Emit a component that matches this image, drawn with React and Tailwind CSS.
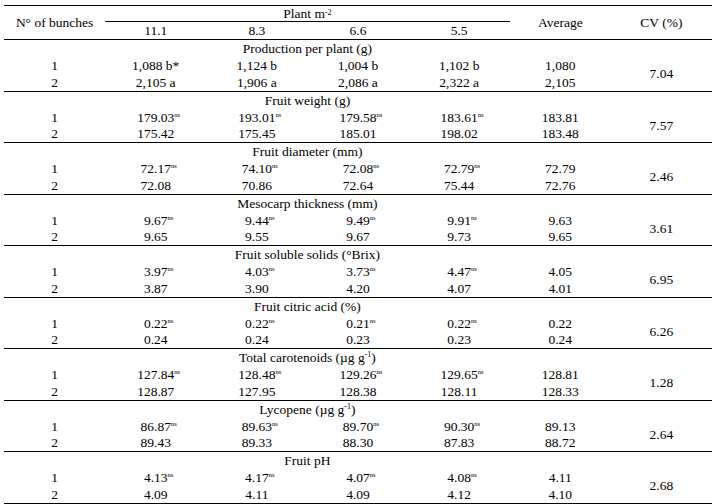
import React from 'react';

// Données du tableau : titre, deux lignes (4 densités + moyenne), CV
const sections = [
  {
    title: <>Production per plant (g)</>,
    rows: [
      ['1,088 b*', '1,124 b', '1,004 b', '1,102 b', '1,080'],
      ['2,105 a', '1,906 a', '2,086 a', '2,322 a', '2,105'],
    ],
    cv: '7.04',
    ns: false,
  },
  {
    title: <>Fruit weight (g)</>,
    rows: [
      ['179.03', '193.01', '179.58', '183.61', '183.81'],
      ['175.42', '175.45', '185.01', '198.02', '183.48'],
    ],
    cv: '7.57',
    ns: true,
  },
  {
    title: <>Fruit diameter (mm)</>,
    rows: [
      ['72.17', '74.10', '72.08', '72.79', '72.79'],
      ['72.08', '70.86', '72.64', '75.44', '72.76'],
    ],
    cv: '2.46',
    ns: true,
  },
  {
    title: <>Mesocarp thickness (mm)</>,
    rows: [
      ['9.67', '9.44', '9.49', '9.91', '9.63'],
      ['9.65', '9.55', '9.67', '9.73', '9.65'],
    ],
    cv: '3.61',
    ns: true,
  },
  {
    title: <>Fruit soluble solids (°Brix)</>,
    rows: [
      ['3.97', '4.03', '3.73', '4.47', '4.05'],
      ['3.87', '3.90', '4.20', '4.07', '4.01'],
    ],
    cv: '6.95',
    ns: true,
  },
  {
    title: <>Fruit citric acid (%)</>,
    rows: [
      ['0.22', '0.22', '0.21', '0.22', '0.22'],
      ['0.24', '0.24', '0.23', '0.23', '0.24'],
    ],
    cv: '6.26',
    ns: true,
  },
  {
    title: <>Total carotenoids (µg g<Sup>-1</Sup>)</>,
    rows: [
      ['127.84', '128.48', '129.26', '129.65', '128.81'],
      ['128.87', '127.95', '128.38', '128.11', '128.33'],
    ],
    cv: '1.28',
    ns: true,
  },
  {
    title: <>Lycopene (µg g<Sup>-1</Sup>)</>,
    rows: [
      ['86.87', '89.63', '89.70', '90.30', '89.13'],
      ['89.43', '89.33', '88.30', '87.83', '88.72'],
    ],
    cv: '2.64',
    ns: true,
  },
  {
    title: <>Fruit pH</>,
    rows: [
      ['4.13', '4.17', '4.07', '4.08', '4.11'],
      ['4.09', '4.11', '4.09', '4.12', '4.10'],
    ],
    cv: '2.68',
    ns: true,
  },
];

function Sup({ children }) {
  return <sup className="text-[8px] top-[-3px]">{children}</sup>;
}

// marque "ns" : déborde à droite sans décaler le nombre
function Ns() {
  return <sup className="inline-block w-0 text-left text-[6.5px] top-[-5px]">ns</sup>;
}

const Section = ({ section, tall }) => (
  <div className={`grid grid-cols-7 border-t border-black ${tall ? 'grid-rows-[17px_17px_17px]' : 'grid-rows-[17px_17px_16px]'}`}>
    <div className="col-start-2 col-span-4 flex items-center justify-center">
      {section.title}
    </div>
    {section.rows.map((row, r) => (
      <React.Fragment key={r}>
        <div className="col-start-1 flex items-center justify-center">{r + 1}</div>
        {row.map((v, i) => (
          <div key={i} className="flex items-center justify-center">
            <span>
              {v}
              {section.ns && r === 0 && i < 4 && <Ns />}
            </span>
          </div>
        ))}
        {r === 0 && (
          <div className="col-start-7 row-start-2 row-span-2 flex items-center justify-center">
            {section.cv}
          </div>
        )}
      </React.Fragment>
    ))}
  </div>
);

export default function App() {
  return (
    <div className="w-[719px] h-[504px] bg-white pt-[5px] pl-[4px] text-black text-[13.5px] leading-none font-['Liberation_Serif','Times_New_Roman',serif]">
      <div className="w-[708px]">
        {/* En-tête */}
        <div className="grid grid-cols-7 grid-rows-[16px_17px] border-t border-black">
          <div className="row-span-2 flex items-center justify-center">N° of bunches</div>
          <div className="col-span-4 border-b border-black flex items-center justify-center">
            <span>Plant m<Sup>-2</Sup></span>
          </div>
          <div className="row-span-2 col-start-6 flex items-center justify-center">Average</div>
          <div className="row-span-2 col-start-7 flex items-center justify-center">CV (%)</div>
          {['11.1', '8.3', '6.6', '5.5'].map((d) => (
            <div key={d} className="flex items-center justify-center pt-[1px]">{d}</div>
          ))}
        </div>
        {sections.map((s, i) => (
          <Section key={i} section={s} tall={i % 2 === 0} />
        ))}
        <div className="border-t border-black" />
      </div>
    </div>
  );
}
